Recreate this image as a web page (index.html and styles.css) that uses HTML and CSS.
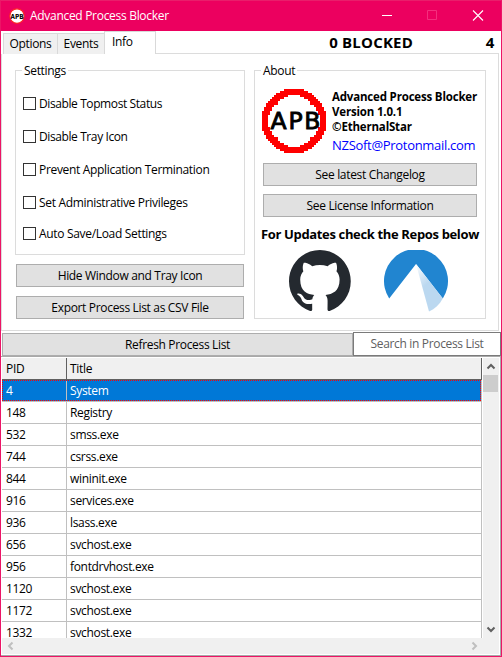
FILE: index.html
```
<!DOCTYPE html>
<html lang="en">
<head>
<meta charset="utf-8">
<title>Advanced Process Blocker</title>
<link rel="stylesheet" href="styles.css">
</head>
<body>
<div class="window">
  <header class="titlebar">
    <svg class="app-icon" viewBox="0 0 64 64"><circle cx="32" cy="32" r="29" fill="#fff" stroke="#f22" stroke-width="5"/><text x="6" y="43" font-size="28" font-weight="bold" textLength="52" lengthAdjust="spacingAndGlyphs">APB</text></svg>
    <h1>Advanced Process Blocker</h1>
    <svg class="caption" viewBox="0 0 137 30"><path d="M18 14.500h10" stroke="#fff"/><path d="M63.500 9.500h9v9h-9z" fill="none" stroke="#f42f7e"/><path d="M109 9.500l10 10M119 9.500l-10 10" stroke="#fff" stroke-width="1.100"/></svg>
  </header>
  <nav class="tabs">
    <span class="tab options">Options</span><span class="tab events">Events</span><span class="tab active">Info</span>
    <div class="status"><b class="blocked">0 BLOCKED</b><b class="count">4</b></div>
  </nav>
  <main class="panel">
    <section class="left">
      <div class="group settings">
        <h2>Settings</h2>
        <label><i></i><span>Disable Topmost Status</span></label>
        <label><i></i><span>Disable Tray Icon</span></label>
        <label><i></i><span class="wide">Prevent Application Termination</span></label>
        <label><i></i><span class="wide">Set Administrative Privileges</span></label>
        <label class="last"><i></i><span class="wide">Auto Save/Load Settings</span></label>
      </div>
      <button>Hide Window and Tray Icon</button>
      <button class="export">Export Process List as CSV File</button>
    </section>
    <section class="group about">
      <h2>About</h2>
      <div class="product">
        <svg class="logo" viewBox="0 0 64 64">
          <defs><path id="arc" fill="#f00" d="M16 0H11V1H9V2H7V3H6V4H5V5H4V6H3V7H2V9H1V11H0V16H3V13H4V11H5V9H6V8H8V6H9V5H11V4H13V3H16Z"/></defs>
          <g shape-rendering="crispEdges"><use href="#arc" transform="scale(2)"/><use href="#arc" transform="translate(64 0) scale(-2 2)"/><use href="#arc" transform="translate(0 64) scale(2 -2)"/><use href="#arc" transform="translate(64 64) scale(-2 -2)"/></g>
          <text x="8.500 26.500 42.300" y="39.500" font-size="23.500" stroke="#000" stroke-width=".9">APB</text>
        </svg>
        <div class="details"><b>Advanced Process Blocker</b><b>Version 1.0.1</b><b>©EthernalStar</b><a>NZSoft@Protonmail.com</a></div>
      </div>
      <button>See latest Changelog</button>
      <button>See License Information</button>
      <strong>For Updates check the Repos below</strong>
      <div class="repos">
        <svg class="github" viewBox="0 0 98 96" preserveAspectRatio="none"><path fill="#24292f" d="M48.854 0C21.839 0 0 22 0 49.217c0 21.756 13.993 40.172 33.405 46.690 2.427.490 3.316-1.059 3.316-2.362 0-1.141-.080-5.052-.080-9.127-13.590 2.934-16.420-5.867-16.420-5.867-2.184-5.704-5.420-7.170-5.420-7.170-4.448-3.015.324-3.015.324-3.015 4.934.326 7.523 5.052 7.523 5.052 4.367 7.496 11.404 5.378 14.235 4.074.404-3.178 1.699-5.378 3.074-6.600-10.839-1.141-22.243-5.378-22.243-24.283 0-5.378 1.940-9.778 5.014-13.200-.485-1.222-2.184-6.275.486-13.038 0 0 4.125-1.304 13.426 5.052a46.970 46.970 0 0 1 12.214-1.630c4.125 0 8.330.571 12.213 1.630 9.302-6.356 13.427-5.052 13.427-5.052 2.670 6.763.970 11.816.485 13.038 3.155 3.422 5.015 7.822 5.015 13.200 0 18.905-11.404 23.060-22.324 24.283 1.780 1.548 3.316 4.481 3.316 9.126 0 6.600-.080 11.897-.080 13.526 0 1.304.890 2.853 3.316 2.364 19.412-6.520 33.405-24.935 33.405-46.691C97.707 22 75.788 0 48.854 0z"/></svg>
        <svg class="codeberg" viewBox="0 0 64 62"><defs><linearGradient id="ridge" x1="0" y1="0" x2=".5" y2="1"><stop offset="0" stop-color="#fff"/><stop offset=".5" stop-color="#bbd8f0"/></linearGradient></defs><path fill="#2185d0" d="M5.200 48.500A32 32 0 1 1 58.800 48.500L32 14z"/><path fill="url(#ridge)" d="M32 14l13 47.500c6-2.800 10.500-7 13.800-13z"/></svg>
      </div>
    </section>
  </main>
  <div class="toolbar"><button>Refresh Process List</button><div class="search">Search in Process List</div></div>
  <div class="list">
    <div class="grid">
      <div class="row head"><span>PID</span><span>Title</span></div>
      <div class="row selected"><span>4</span><span>System</span></div>
      <div class="row"><span>148</span><span>Registry</span></div>
      <div class="row"><span>532</span><span>smss.exe</span></div>
      <div class="row"><span>744</span><span>csrss.exe</span></div>
      <div class="row"><span>844</span><span>wininit.exe</span></div>
      <div class="row"><span>916</span><span>services.exe</span></div>
      <div class="row"><span>936</span><span>lsass.exe</span></div>
      <div class="row"><span>656</span><span>svchost.exe</span></div>
      <div class="row"><span>956</span><span>fontdrvhost.exe</span></div>
      <div class="row"><span>1120</span><span>svchost.exe</span></div>
      <div class="row"><span>1172</span><span>svchost.exe</span></div>
      <div class="row"><span>1332</span><span>svchost.exe</span></div>
    </div>
    <div class="vscroll">
      <svg viewBox="0 0 16 17"><path d="M4.500 10.500L8 7l3.500 3.500" fill="none" stroke="#606060" stroke-width="2"/></svg>
      <div class="thumb"></div>
      <svg class="down" viewBox="0 0 16 17"><path d="M4.500 6.500L8 10l3.500-3.500" fill="none" stroke="#606060" stroke-width="2"/></svg>
    </div>
    <div class="hscroll">
      <svg viewBox="0 0 16 16"><path d="M10.500 4.500L7 8l3.500 3.500" fill="none" stroke="#bfbfbf" stroke-width="2"/></svg>
      <svg viewBox="0 0 16 16"><path d="M6.500 4.500L10 8l-3.500 3.500" fill="none" stroke="#bfbfbf" stroke-width="2"/></svg>
    </div>
  </div>
</div>
</body>
</html>
```
FILE: styles.css
```
* { box-sizing: border-box; }
body { margin: 0; font: 12px/16px "Open Sans", sans-serif; letter-spacing: -0.33px; color: #000; }
h1, h2 { margin: 0; font-size: 12px; font-weight: 400; }
h1 { letter-spacing: -0.3px; }
.window { width: 502px; height: 657px; overflow: hidden; background: #fff; border: 1px solid #ec1566; border-top-color: #e91e6b; display: flex; flex-direction: column; }

.titlebar { height: 30px; background: #ec005f; color: #fff; display: flex; align-items: center; padding-left: 8px; flex: none; }
.app-icon { width: 16px; height: 16px; margin-right: 5px; margin-top: -1px; }
.app-icon text, .logo text { font-family: "DejaVu Sans", sans-serif; letter-spacing: 0; }
.caption { width: 137px; height: 30px; margin-left: auto; }

.tabs { height: 23px; display: flex; align-items: flex-end; padding-left: 2px; flex: none; }
.tab { height: 21px; background: #f0f0f0; border: 1px solid #d9d9d9; border-bottom: 0; padding-top: 2px; text-align: center; }
.options { width: 54px; border-right: 0; }
.events { width: 47px; border-right: 0; }
.active { width: 52px; height: 23px; background: #fff; text-align: left; padding-left: 7px; }
.status { flex: 1; height: 23px; border-bottom: 1px solid #dcdcdc; display: flex; justify-content: flex-end; margin-right: 2px; font-size: 15px; line-height: 22px; }
.count { width: 86px; padding-right: 5px; text-align: right; }
.blocked { font-size: 15px; letter-spacing: 0.200px; }

.panel { height: 277px; flex: none; margin-right: 2px; border: 1px solid #dcdcdc; border-top: 0; display: flex; padding: 16px 12px 12px 13px; gap: 9px; }
.group { border: 1px solid #dcdcdc; display: flex; flex-direction: column; }
.group h2 { align-self: flex-start; background: #fff; margin: -8px 0 0 6px; padding: 0 2px; height: 16px; }
.left { width: 230px; display: flex; flex-direction: column; }
button { font: inherit; letter-spacing: inherit; color: #000; background: #e1e1e1; border: 1px solid #adadad; border-radius: 0; height: 23px; padding: 0; line-height: 20px; }
.settings { height: 185px; margin-bottom: 9px; flex: none; }
.settings label { display: flex; align-items: center; height: 17px; margin: 0 0 16px 7px; flex: none; letter-spacing: -0.400px; }
.settings .wide { letter-spacing: -0.320px; }
.settings h2 + label { margin-top: 16px; }
.settings .last { margin-top: -2px; margin-bottom: 0; }
.settings i { width: 13px; height: 13px; border: 1px solid #333; margin-right: 3px; }
.left > button { margin: 0 1px; flex: none; }
.left > .export { margin-top: 9px; }
.about { width: 232px; height: 249px; }
.product { display: flex; height: 72px; margin: 10px 0 2px 7px; flex: none; }
.logo { width: 64px; height: 64px; flex: none; }
.details { margin: 0 0 0 6px; display: flex; flex-direction: column; line-height: 15px; white-space: nowrap; }
.details b { font-size: 11.500px; letter-spacing: -0.180px; }
.details a { color: #00f; font-size: 13px; line-height: 20px; margin-top: 1px; letter-spacing: -0.300px; }
.about > button { margin: 0 8px 8px; flex: none; }
.about > strong { font-size: 13px; line-height: 18px; white-space: nowrap; text-align: center; letter-spacing: -0.350px; }
.repos { display: flex; padding: 7px 0 0 34px; gap: 33px; }
.github { width: 62px; height: 61px; }
.codeberg { width: 64px; height: 62px; }

.toolbar { display: flex; height: 25px; padding: 1px 0 0 1px; flex: none; }
.toolbar button { width: 351px; height: 23px; margin-top: 1px; flex: none; }
.search { flex: 1; height: 24px; border: 1px solid #7a7a7a; color: #606060; text-align: center; line-height: 21px; }

.list { flex: 1; margin: 0; border: 1px solid #a9a9a9; border-width: 1px 1px 1px 0; padding: 1px; display: grid; grid-template-columns: 480px 16px; grid-template-rows: 280px 16px; column-gap: 1px; min-height: 0; }
.grid { overflow: hidden; }
.row { height: 22px; display: grid; grid-template-columns: 65px 1fr; }
.row span { border: solid #c0c0c0; border-width: 0 1px 1px 0; padding-left: 4px; line-height: 21px; }
.row span + span { padding-left: 3px; }
.head { background: #f0f0f0; }
.head span { border-color: #606060; }
.selected { position: relative; background: #0078d7; color: #fff; }
.selected::after { content: ""; position: absolute; inset: 0 1px 1px 0; border: 1px dotted #f00; }
.vscroll { background: #f0f0f0; display: flex; flex-direction: column; }
.vscroll svg { width: 16px; height: 17px; }
.thumb { height: 17px; background: #cdcdcd; margin-right: 1px; }
.vscroll .down { margin-top: auto; }
.hscroll { grid-column: 1 / 3; background: #f0f0f0; display: flex; justify-content: space-between; padding-right: 17px; }
.hscroll svg { width: 16px; height: 16px; }
```
